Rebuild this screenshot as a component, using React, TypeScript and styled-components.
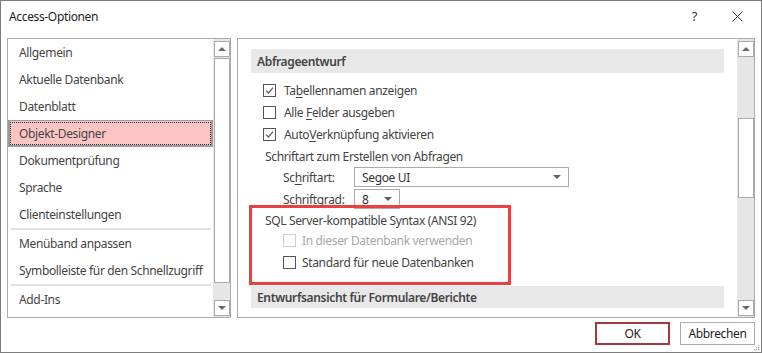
import React from 'react';
import styled, { createGlobalStyle, css } from 'styled-components';

const GlobalStyle = createGlobalStyle`
  html, body {
    margin: 0;
    padding: 0;
    background: #ffffff;
  }
  * {
    box-sizing: border-box;
  }
`;

const FONT = `'Segoe UI', 'Noto Sans', 'Liberation Sans', sans-serif`;

const navItems: (string | null)[] = [
  'Allgemein',
  'Aktuelle Datenbank',
  'Datenblatt',
  'Objekt-Designer',
  'Dokumentprüfung',
  'Sprache',
  'Clienteinstellungen',
  null,
  'Menüband anpassen',
  'Symbolleiste für den Schnellzugriff',
  null,
  'Add-Ins',
];

const SELECTED = 'Objekt-Designer';

export default function App() {
  return (
    <>
      <GlobalStyle />
      <Window>
        <TitleBar>
          <Title>Access-Optionen</Title>
          <TitleButtons>
            <HelpMark>?</HelpMark>
            <svg width="11" height="11" viewBox="0 0 11 11">
              <path d="M0.5 0.5 L10.5 10.5 M10.5 0.5 L0.5 10.5" stroke="#333" strokeWidth="1" />
            </svg>
          </TitleButtons>
        </TitleBar>

        <Body>
          <NavPanel>
            <NavList>
              {navItems.map((item, i) =>
                item === null ? (
                  <NavSeparator key={i} />
                ) : (
                  <NavItem key={i} $selected={item === SELECTED}>
                    {item}
                  </NavItem>
                )
              )}
            </NavList>
            <Scrollbar $thumbTop={1} $thumbHeight={225} />
          </NavPanel>

          <ContentPanel>
            <Content>
              <SectionHeader>Abfrageentwurf</SectionHeader>

              <CheckRow $indent={12} $gap={8} $top={6}>
                <CheckBox checked />
                <span>
                  Ta<u>b</u>ellennamen anzeigen
                </span>
              </CheckRow>
              <CheckRow $indent={12} $gap={8}>
                <CheckBox />
                <span>
                  Alle <u>F</u>elder ausgeben
                </span>
              </CheckRow>
              <CheckRow $indent={12} $gap={8}>
                <CheckBox checked />
                <span>
                  Auto<u>V</u>erknüpfung aktivieren
                </span>
              </CheckRow>

              <GroupLabel $height={22}>Schriftart zum Erstellen von Abfragen</GroupLabel>

              <FieldRow>
                <FieldLabel>
                  Sc<u>h</u>riftart:
                </FieldLabel>
                <Combo $width={215}>
                  <span>Segoe UI</span>
                  <ComboArrow />
                </Combo>
              </FieldRow>
              <FieldRow $top={2}>
                <FieldLabel>
                  Schrift<u>g</u>rad:
                </FieldLabel>
                <Combo $width={46}>
                  <span>8</span>
                  <ComboArrow />
                </Combo>
              </FieldRow>

              <GroupLabel $height={20} $top={1}>
                SQL Server-kompatible Syntax (ANSI 92)
              </GroupLabel>
              <CheckRow $indent={32} $gap={6} $height={20} $disabled>
                <CheckBox disabled />
                <span>In dieser Datenbank verwenden</span>
              </CheckRow>
              <CheckRow $indent={32} $gap={6} $height={20} $top={2}>
                <CheckBox />
                <span>Standard für neue Datenbanken</span>
              </CheckRow>

              <SectionHeader $top={14} $height={22}>
                Entwurfsansicht für Formulare/Berichte
              </SectionHeader>

              <Highlight />
            </Content>
            <Scrollbar $thumbTop={61} $thumbHeight={80} />
          </ContentPanel>
        </Body>

        <Footer>
          <DialogButton $default>OK</DialogButton>
          <DialogButton>Abbrechen</DialogButton>
        </Footer>

        <Grip viewBox="0 0 7 7" width="7" height="7">
          {[
            [5, 1],
            [5, 3],
            [3, 3],
            [5, 5],
            [3, 5],
            [1, 5],
          ].map(([x, y], i) => (
            <rect key={i} x={x} y={y} width="1.4" height="1.4" fill="#b4b4b4" />
          ))}
        </Grip>
      </Window>
    </>
  );
}

function CheckBox({ checked, disabled }: { checked?: boolean; disabled?: boolean }) {
  return (
    <Box $disabled={disabled}>
      {checked && (
        <svg width="11" height="11" viewBox="0 0 11 11">
          <path d="M2 5.6 L4.4 8 L9 2.6" fill="none" stroke="#5a5a5a" strokeWidth="1.2" />
        </svg>
      )}
    </Box>
  );
}

function Scrollbar({ $thumbTop, $thumbHeight }: { $thumbTop: number; $thumbHeight: number }) {
  return (
    <Track>
      <ArrowButton>
        <Arrow $up />
      </ArrowButton>
      <Thumb style={{ marginTop: $thumbTop, height: $thumbHeight }} />
      <TrackFill />
      <ArrowButton>
        <Arrow />
      </ArrowButton>
    </Track>
  );
}

const Window = styled.div`
  position: relative;
  width: 762px;
  height: 353px;
  border: 1px solid #7c7c7c;
  background: #ffffff;
  display: flex;
  flex-direction: column;
  font-family: ${FONT};
  font-size: 12px;
  letter-spacing: -0.35px;
  color: #444444;
`;

const TitleBar = styled.div`
  height: 30px;
  display: flex;
  align-items: center;
  justify-content: space-between;
  padding: 0 18px 0 8px;
`;

const Title = styled.div`
  color: #1e1e1e;
  font-size: 12px;
`;

const TitleButtons = styled.div`
  display: flex;
  align-items: center;
  gap: 35px;
`;

const HelpMark = styled.span`
  color: #333333;
  font-size: 13px;
`;

const Body = styled.div`
  margin-top: 7px;
  height: 280px;
  display: flex;
  gap: 6px;
  padding: 0 6px;
`;

const NavPanel = styled.div`
  width: 224px;
  border: 1px solid #ababab;
  display: flex;
`;

const NavList = styled.div`
  flex: 1;
  display: flex;
  flex-direction: column;
`;

const NavItem = styled.div<{ $selected?: boolean }>`
  height: 27px;
  flex-shrink: 0;
  display: flex;
  align-items: center;
  padding-left: 11px;
  white-space: nowrap;
  color: #444444;
  ${({ $selected }) =>
    $selected &&
    css`
      background: #fdc4c4;
      border: 1px solid #9c9c9c;
      border-width: 1px 2px 2px 2px;
      padding-left: 9px;
      outline: 1px dotted #2a2a2a;
      outline-offset: -3px;
    `}
`;

const NavSeparator = styled.div`
  height: 2px;
  flex-shrink: 0;
  margin: 0 2px 0 3px;
  background: #e3e3e3;
`;

const Track = styled.div`
  width: 17px;
  flex-shrink: 0;
  background: #e6e6e6;
  display: flex;
  flex-direction: column;
  padding: 2px 0 1px 1px;
`;

const ArrowButton = styled.div`
  height: 16px;
  flex-shrink: 0;
  border: 1px solid #ababab;
  background: #ffffff;
  display: flex;
  align-items: center;
  justify-content: center;
`;

const Arrow = styled.div<{ $up?: boolean }>`
  width: 0;
  height: 0;
  border-left: 4px solid transparent;
  border-right: 4px solid transparent;
  ${({ $up }) =>
    $up
      ? css`
          border-bottom: 4px solid #6a6a6a;
        `
      : css`
          border-top: 4px solid #6a6a6a;
        `}
`;

const Thumb = styled.div`
  flex-shrink: 0;
  border: 1px solid #ababab;
  background: #ffffff;
`;

const TrackFill = styled.div`
  flex: 1;
`;

const ContentPanel = styled.div`
  flex: 1;
  border: 1px solid #ababab;
  display: flex;
`;

const Content = styled.div`
  position: relative;
  flex: 1;
  padding: 10px 13px 0 13px;
  display: flex;
  flex-direction: column;
  overflow: hidden;
`;

const SectionHeader = styled.div<{ $top?: number; $height?: number }>`
  flex-shrink: 0;
  margin-top: ${({ $top }) => $top ?? 0}px;
  height: ${({ $height }) => $height ?? 24}px;
  background: #e8e8e8;
  display: flex;
  align-items: center;
  padding-left: 6px;
  font-weight: 600;
  color: #444444;
  white-space: nowrap;
`;

const CheckRow = styled.div<{
  $indent: number;
  $gap: number;
  $top?: number;
  $height?: number;
  $disabled?: boolean;
}>`
  flex-shrink: 0;
  display: flex;
  align-items: center;
  margin-top: ${({ $top }) => $top ?? 0}px;
  height: ${({ $height }) => $height ?? 22}px;
  padding-left: ${({ $indent }) => $indent}px;
  gap: ${({ $gap }) => $gap}px;
  color: ${({ $disabled }) => ($disabled ? '#a8a8a8' : '#444444')};
  white-space: nowrap;

  u {
    text-underline-offset: 2px;
  }
`;

const Box = styled.div<{ $disabled?: boolean }>`
  width: 13px;
  height: 13px;
  flex-shrink: 0;
  border: 1px solid ${({ $disabled }) => ($disabled ? '#d0d0d0' : '#555555')};
  background: #ffffff;
  display: flex;
  align-items: center;
  justify-content: center;
`;

const GroupLabel = styled.div<{ $height: number; $top?: number }>`
  flex-shrink: 0;
  height: ${({ $height }) => $height}px;
  margin-top: ${({ $top }) => $top ?? 0}px;
  display: flex;
  align-items: center;
  padding-left: 14px;
  white-space: nowrap;
`;

const FieldRow = styled.div<{ $top?: number }>`
  flex-shrink: 0;
  height: 20px;
  margin-top: ${({ $top }) => $top ?? 0}px;
  display: flex;
  align-items: center;
  padding-left: 32px;

  u {
    text-underline-offset: 2px;
  }
`;

const FieldLabel = styled.div`
  width: 71px;
  white-space: nowrap;
`;

const Combo = styled.div<{ $width: number }>`
  width: ${({ $width }) => $width}px;
  height: 20px;
  border: 1px solid #ababab;
  background: #ffffff;
  display: flex;
  align-items: center;
  justify-content: space-between;
  padding: 0 7px 0 7px;
  color: #333333;
`;

const ComboArrow = styled.div`
  width: 0;
  height: 0;
  border-left: 4px solid transparent;
  border-right: 4px solid transparent;
  border-top: 4px solid #606060;
`;

const Highlight = styled.div`
  position: absolute;
  left: 11px;
  top: 166px;
  width: 262px;
  height: 80px;
  border: 3px solid #e8413f;
  pointer-events: none;
`;

const Footer = styled.div`
  margin-top: 4px;
  display: flex;
  justify-content: flex-end;
  gap: 10px;
  padding-right: 6px;
`;

const DialogButton = styled.div<{ $default?: boolean }>`
  width: 75px;
  height: 23px;
  display: flex;
  align-items: center;
  justify-content: center;
  background: #ffffff;
  color: #1e1e1e;
  border: ${({ $default }) => ($default ? '2px solid #a5383c' : '1px solid #adadad')};
`;

const Grip = styled.svg`
  position: absolute;
  right: 1px;
  bottom: 1px;
`;
